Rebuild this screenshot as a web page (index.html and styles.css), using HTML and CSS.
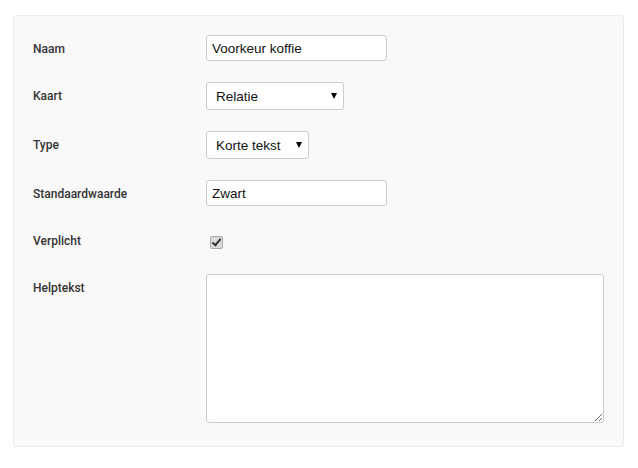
FILE: index.html
```html
<!DOCTYPE html>
<html lang="nl">

<head>
    <meta charset="UTF-8">
    <title>Veld bewerken</title>
    <link rel="stylesheet" href="styles.css">
</head>

<body>

    <form class="field-panel">
        <div class="form-row">
            <label class="form-label">Naam</label>
            <input type="text" class="text-input" value="Voorkeur koffie">
        </div>

        <div class="form-row">
            <label class="form-label">Kaart</label>
            <span class="select-wrap">
                <select class="select-box select-wide">
                    <option>Relatie</option>
                    <option>Project</option>
                </select>
            </span>
        </div>

        <div class="form-row">
            <label class="form-label">Type</label>
            <span class="select-wrap">
                <select class="select-box">
                    <option>Korte tekst</option>
                    <option>Lange tekst</option>
                </select>
            </span>
        </div>

        <div class="form-row">
            <label class="form-label">Standaardwaarde</label>
            <input type="text" class="text-input" value="Zwart">
        </div>

        <div class="form-row check-row">
            <label class="form-label">Verplicht</label>
            <input type="checkbox" class="check" checked>
        </div>

        <div class="form-row">
            <label class="form-label">Helptekst</label>
            <textarea class="text-area"></textarea>
        </div>
    </form>

</body>

</html>
```

FILE: styles.css
```css
body {
    margin: 0;
    padding: 15px 13px 0 13px;
    background: #fff;
    font-family: "Liberation Sans", Arial, sans-serif;
}

.field-panel {
    width: 571px;
    padding: 19px 19px 23px 19px;
    background: #f9f9f9;
    border: 1px solid #ececec;
    border-radius: 3px;
    display: flex;
    flex-direction: column;
    gap: 21px;
}

.form-row {
    display: grid;
    grid-template-columns: 173px 1fr;
    align-items: start;
}

.form-label {
    font-family: Roboto, "Liberation Sans", sans-serif;
    font-size: 12px;
    font-weight: 500;
    color: #333;
    padding-top: 7px;
    line-height: 14px;
}

.text-input {
    width: 181px;
    height: 26px;
    box-sizing: border-box;
    border: 1px solid #ccc;
    border-radius: 3px;
    padding: 0 5px;
    font-family: "Liberation Sans", Arial, sans-serif;
    font-size: 13.5px;
    color: #111;
    background: #fff;
}

.select-wrap {
    position: relative;
    display: inline-block;
    justify-self: start;
}

.select-wrap::after {
    content: "";
    position: absolute;
    right: 7px;
    top: 11px;
    border-left: 3.5px solid transparent;
    border-right: 3.5px solid transparent;
    border-top: 6px solid #000;
    pointer-events: none;
}

.select-box {
    appearance: none;
    -webkit-appearance: none;
    height: 28px;
    width: 103px;
    box-sizing: border-box;
    border: 1px solid #ccc;
    border-radius: 3px;
    padding: 0 0 0 9px;
    font-family: "Liberation Sans", Arial, sans-serif;
    font-size: 13.5px;
    color: #111;
    background: #fff;
    display: block;
}

.select-wide {
    width: 138px;
}

.check-row {
    height: 26px;
}

.check {
    appearance: none;
    -webkit-appearance: none;
    margin: 9px 0 0 4px;
    width: 13px;
    height: 13px;
    box-sizing: border-box;
    border: 1px solid #a9a9a9;
    border-radius: 2px;
    background: #dcdcdc;
    position: relative;
}

.check:checked::after {
    content: "";
    position: absolute;
    left: 3px;
    top: 0px;
    width: 3px;
    height: 7px;
    border-right: 2.5px solid #333;
    border-bottom: 2.5px solid #333;
    transform: rotate(40deg);
}

.text-area {
    height: 149px;
    box-sizing: border-box;
    border: 1px solid #ccc;
    border-radius: 3px;
    background: #fff;
    resize: vertical;
    margin: 0;
}
```
